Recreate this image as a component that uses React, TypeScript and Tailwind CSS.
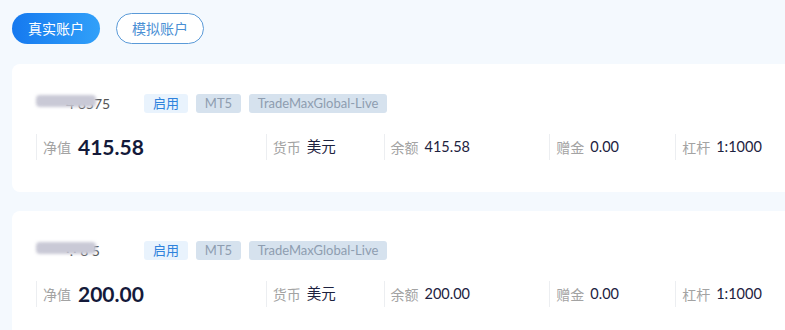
const font = { fontFamily: '"Lato", "Noto Sans CJK SC", sans-serif' };

interface Account {
  tail: string;
  equity: string;
  balance: string;
}

const accounts: Account[] = [
  { tail: "4 6575", equity: "415.58", balance: "415.58" },
  { tail: "·.· 8 5", equity: "200.00", balance: "200.00" },
];

const Stat = ({ label, value, width }: { label: string; value: string; width: string }) => (
  <div className={`flex h-[26px] items-center border-l border-[#eceef1] pl-[6px] ${width}`}>
    <span className="text-[14px] text-[#a3a3a3]">{label}</span>
    <span className="ml-[6px] text-[14.5px] text-[#1d2240]">{value}</span>
  </div>
);

const AccountCard = ({ account }: { account: Account }) => (
  <div className="rounded-l-[8px] bg-white pb-[32px] pl-[24px] pt-[30px]">
    <div className="flex h-[19px] items-center">
      <div className="relative w-[108px] text-[14px] text-[#555]">
        <span className="pl-[30px]">{account.tail}</span>
        <div className="absolute left-0 top-[2px] h-[12px] w-[60px] rounded-sm bg-[#c9c9d6] blur-[1.5px]" />
      </div>
      <span className="flex h-[19px] w-[44px] items-center justify-center rounded-[3px] bg-[#e9f3fd] text-[13px] text-[#2f82dc]">
        启用
      </span>
      <span className="ml-[8px] flex h-[19px] w-[45px] items-center justify-center rounded-[3px] bg-[#d6e2ee] text-[13px] text-[#8e9db0]">
        MT5
      </span>
      <span className="ml-[8px] flex h-[19px] w-[138px] items-center justify-center rounded-[3px] bg-[#d6e2ee] text-[13px] text-[#8e9db0]">
        TradeMaxGlobal-Live
      </span>
    </div>
    <div className="mt-[21px] flex">
      <div className="flex h-[26px] w-[230px] items-center border-l border-[#eceef1] pl-[6px]">
        <span className="text-[14px] text-[#a3a3a3]">净值</span>
        <span className="ml-[7px] text-[21px] font-bold text-[#141a3a]">{account.equity}</span>
      </div>
      <Stat label="货币" value="美元" width="w-[118px]" />
      <Stat label="余额" value={account.balance} width="w-[166px]" />
      <Stat label="赠金" value="0.00" width="w-[126px]" />
      <Stat label="杠杆" value="1:1000" width="w-[110px]" />
    </div>
  </div>
);

export default function App() {
  return (
    <div className="h-[330px] w-[785px] overflow-hidden bg-[#f4f9fe] pl-[12px] pt-[13px]" style={font}>
      <div className="flex gap-[16px]">
        <button className="h-[31px] w-[88px] rounded-full bg-gradient-to-r from-[#1679ef] to-[#31a0f9] text-[14px] text-white">
          真实账户
        </button>
        <button className="h-[31px] w-[88px] rounded-full border border-[#5a9ad8] bg-white text-[14px] text-[#4a8fd4]">
          模拟账户
        </button>
      </div>
      <div className="mt-[20px] flex flex-col gap-[19px]">
        {accounts.map((a, i) => (
          <AccountCard key={i} account={a} />
        ))}
      </div>
    </div>
  );
}
